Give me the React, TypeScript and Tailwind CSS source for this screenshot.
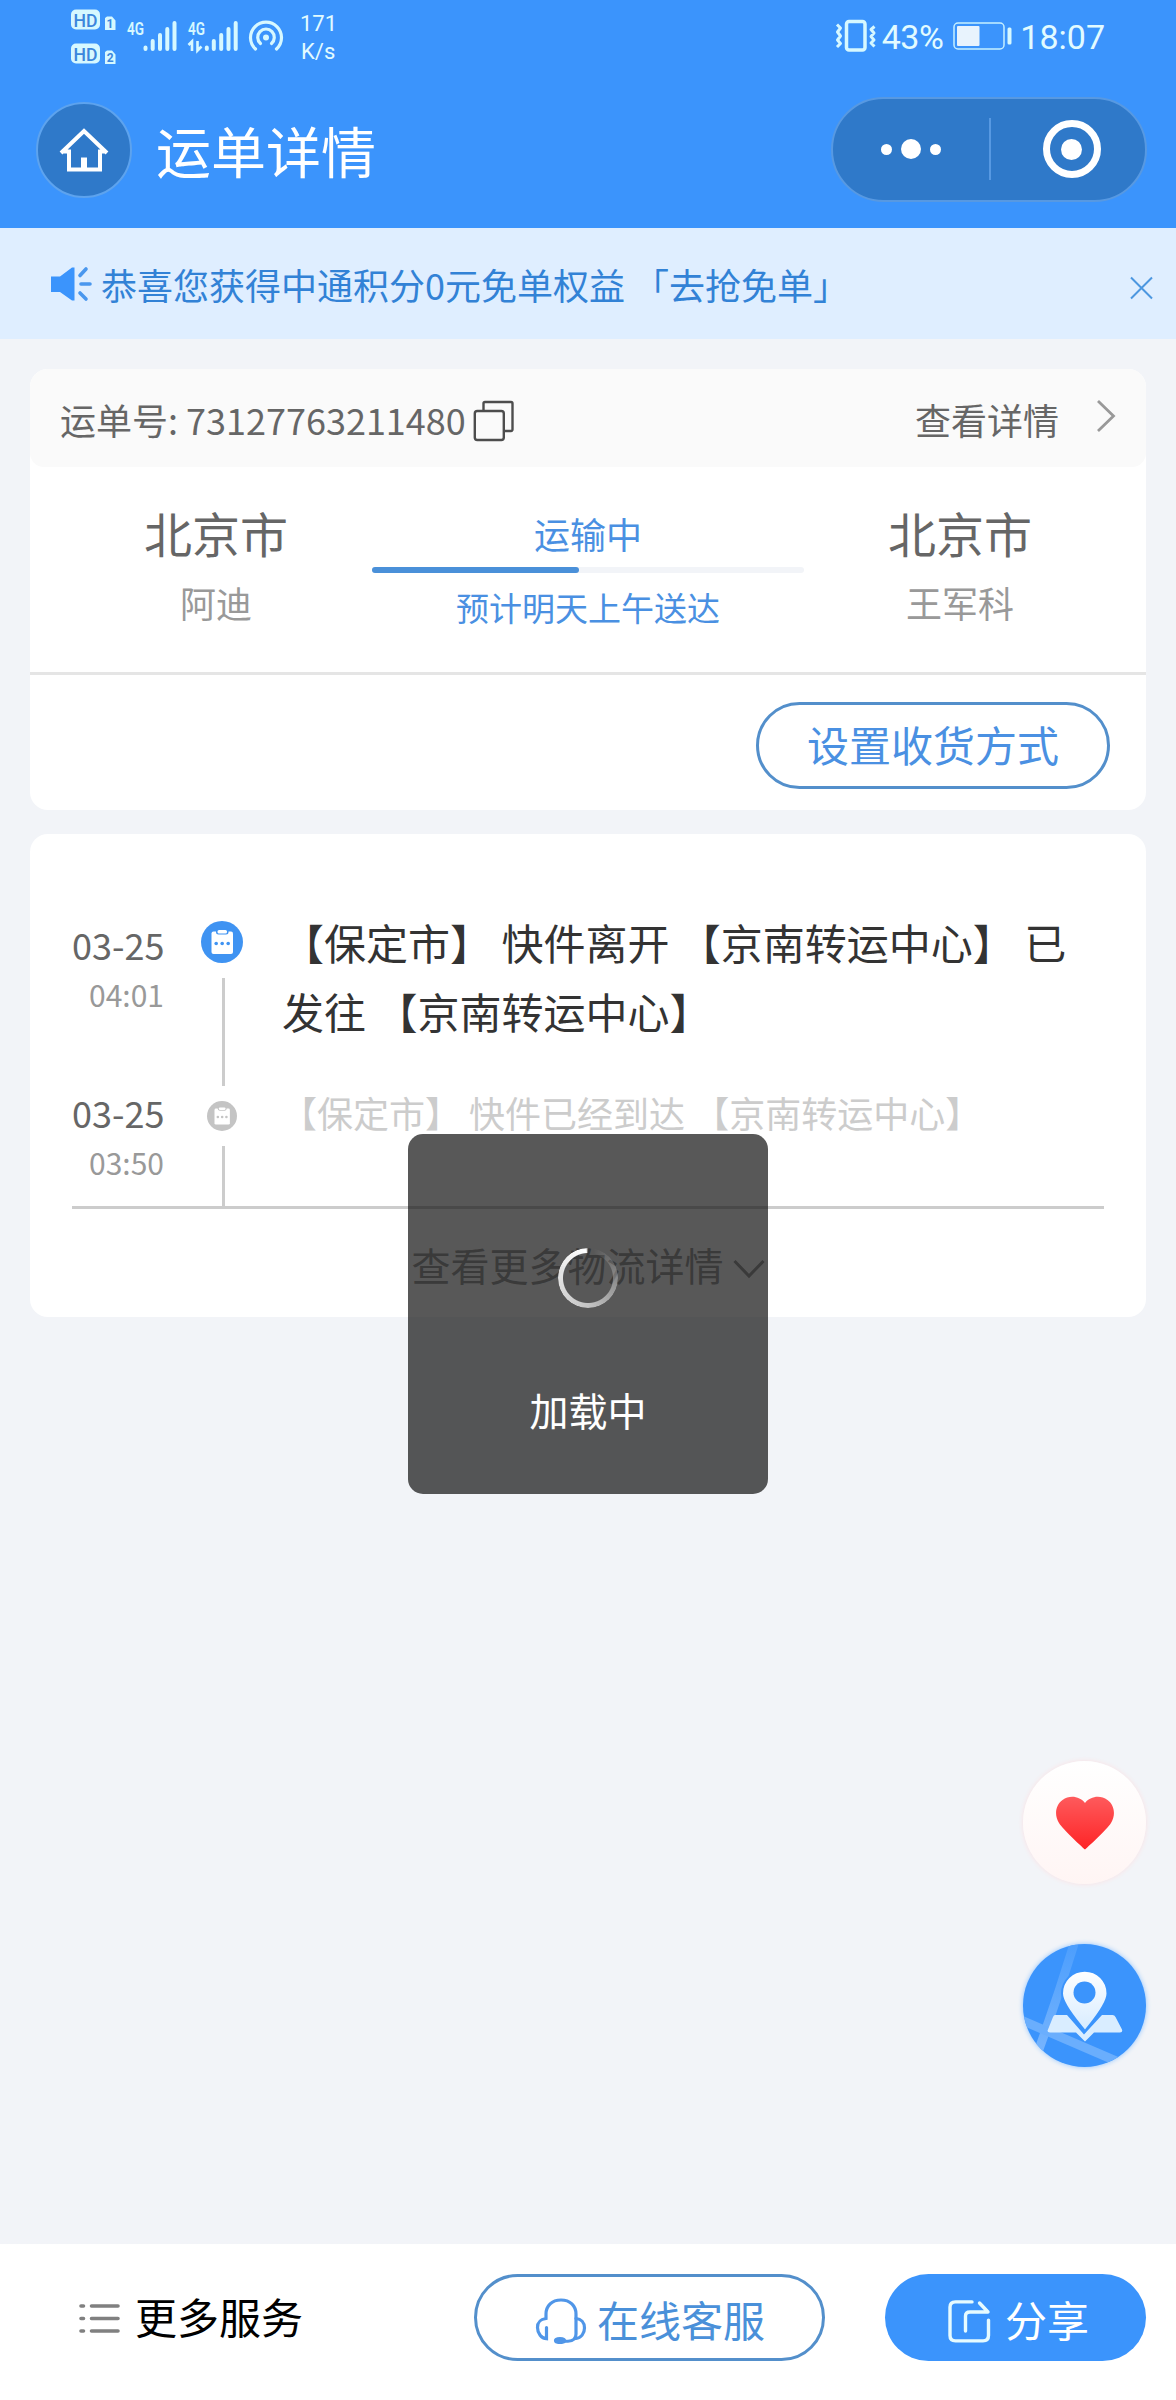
const events = [
    {
        date: '03-25',
        time: '04:01',
        text: '【保定市】 快件离开 【京南转运中心】 已发往 【京南转运中心】',
        current: true,
    },
    {
        date: '03-25',
        time: '03:50',
        text: '【保定市】 快件已经到达 【京南转运中心】',
        current: false,
    },
];

function SignalIcons() {
    return (
        <svg width="200" height="72" viewBox="68 0 200 72" fill="#d6f8ff" className="shrink-0 font-['Roboto',sans-serif]">
            <rect x="71" y="9.5" width="29" height="20" rx="5" />
            <rect x="71" y="43.5" width="29" height="20" rx="5" />
            <g fill="#3c86dc" fontSize="19" fontWeight="500" textAnchor="middle">
                <text x="85.5" y="26.5" textLength="24" lengthAdjust="spacingAndGlyphs">HD</text>
                <text x="85.5" y="60.5" textLength="24" lengthAdjust="spacingAndGlyphs">HD</text>
            </g>
            <path d="M107 16.5h5l3.5 4V30h-10.5V18zM107 50.5h5l3.5 4V64h-10.5V52z" />
            <g fill="#3c86dc" fontSize="12" fontWeight="700" textAnchor="middle">
                <text x="110" y="28">1</text>
                <text x="110.3" y="62">2</text>
            </g>
            <g fontSize="19" fontWeight="600">
                <text x="127" y="34.5" textLength="17" lengthAdjust="spacingAndGlyphs">4G</text>
                <text x="188" y="34.5" textLength="17" lengthAdjust="spacingAndGlyphs">4G</text>
            </g>
            <g stroke="#d6f8ff" strokeWidth="4" strokeLinecap="round">
                <path d="M145.5 47.5v1.5M152.7 41v8M160 35v14M167.3 29v20M174.5 23v26" />
                <path d="M206.8 47.5v1.5M213.8 41v8M221.2 35v14M228.5 29v20M235.7 23v26" />
            </g>
            <path d="M188.5 45l3.5-3.5V51M197.5 41v9.5l4-4" fill="none" stroke="#d6f8ff" strokeWidth="2.6" />
        </svg>
    );
}

function HotspotIcon() {
    return (
        <svg width="36" height="36" viewBox="0 0 36 36" fill="none" stroke="#d6f8ff" strokeWidth="3.2" strokeLinecap="round">
            <path d="M7.5 30a15.5 15.5 0 1 1 21 0" />
            <path d="M12.5 24.5a8.3 8.3 0 1 1 11 0" />
            <circle cx="18" cy="18.5" r="3" fill="#d6f8ff" stroke="none" />
        </svg>
    );
}

function VibrateIcon() {
    return (
        <svg width="42" height="34" viewBox="0 0 42 34" fill="none" stroke="#d6f8ff" strokeWidth="3" strokeLinejoin="round">
            <rect x="11.5" y="2.5" width="18.5" height="28.5" rx="2.5" strokeWidth="3.5" />
            <path d="M2 5.500l3.500 3.500-3 4 3 4-3 4 3 3.500L2 28M39.500 7.500L36 10.500l3 3.500-3 3.500 3 3.500-3 3 3.500 3.500" />
        </svg>
    );
}

function BatteryIcon() {
    return (
        <svg width="60" height="28" viewBox="0 0 60 28" fill="none">
            <rect x="1" y="1" width="50" height="26" rx="4" stroke="#c5efff" strokeWidth="1.5" />
            <rect x="4" y="4" width="22.5" height="20" rx="1" fill="#e8f3fd" />
            <rect x="54.5" y="5.5" width="4" height="17" rx="1.5" fill="#d6f8ff" />
        </svg>
    );
}

function StatusBar() {
    return (
        <div className="flex h-[72px] items-center justify-between pl-[68px] pr-[71px] font-['Roboto',sans-serif] text-[#e2fbff]">
            <div className="flex items-center">
                <SignalIcons />
                <div className="-ml-5 -mb-px">
                    <HotspotIcon />
                </div>
                <div className="ml-4 mt-[3px] text-[22px] leading-[28px]">
                    <p>171</p>
                    <p className="ml-px">K/s</p>
                </div>
            </div>
            <div className="flex items-center text-[34px] leading-none">
                <VibrateIcon />
                <span className="ml-[5px] mt-0.5 tracking-[-0.5px]">43%</span>
                <span className="ml-2.5">
                    <BatteryIcon />
                </span>
                <span className="ml-[7px] mt-0.5">18:07</span>
            </div>
        </div>
    );
}

function TitleBar() {
    return (
        <div className="flex h-[156px] items-center pl-9 pr-[29px]">
            <button className="flex size-24 items-center justify-center rounded-full border-2 border-[#5da3ee] bg-[#2f79c9]">
                <svg width="50" height="46" viewBox="0 0 50 46" fill="none" stroke="#fff" strokeWidth="4">
                    <path d="M2 26L25 4l23 22M3.5 24.5h6.500V42.500h31V24.500h6" />
                    <path d="M25 43V30.5" strokeWidth="6" />
                </svg>
            </button>
            <h1 className="-mt-px ml-6 text-[55px] leading-none text-white">运单详情</h1>
            <div className="-mt-0.5 ml-auto flex h-[105px] w-[316px] items-center rounded-full border-2 border-[#5799e2] bg-[#2f79c9]">
                <div className="flex w-[156px] items-center justify-center gap-[9px]">
                    <i className="size-[11px] rounded-full bg-white" />
                    <i className="size-5 rounded-full bg-white" />
                    <i className="size-[11px] rounded-full bg-white" />
                </div>
                <div className="h-[62px] w-0.5 bg-[#5799e2]" />
                <div className="flex flex-1 items-center justify-center pl-[7px]">
                    <div className="flex size-[58px] items-center justify-center rounded-full border-[7px] border-white">
                        <i className="size-[21px] rounded-full bg-white" />
                    </div>
                </div>
            </div>
        </div>
    );
}

function Notice() {
    return (
        <div className="flex h-[111px] items-center bg-[#dfeeff] pl-[50px] pr-[23px] text-[36px] leading-none text-[#3282d6]">
            <svg width="42" height="36" viewBox="0 0 42 36" fill="#3b94fc">
                <path d="M1 10.500h9L22 1.500h2.500v33H22L10 26H1z" />
                <path d="M30 9.500l6-6.500M31 18h9M30 27l6 6" fill="none" stroke="#4a97ee" strokeWidth="3.6" strokeLinecap="round" />
            </svg>
            <p className="ml-[9px] whitespace-pre">恭喜您获得中通积分0元免单权益 「去抢免单」</p>
            <svg width="23" height="24" viewBox="0 0 23 24" stroke="#4c97e0" strokeWidth="2" className="ml-auto mt-2">
                <path d="M1 1.500l21 21M22 1.500l-21 21" />
            </svg>
        </div>
    );
}

function WaybillCard() {
    return (
        <section className="overflow-hidden rounded-[18px] bg-white">
            <div className="flex h-[98px] items-center rounded-b-[14px] bg-[#fafafa] px-[30px] text-[36px] leading-none text-[#666]">
                <span className="mt-0.5">运单号: 73127763211480</span>
                <svg width="42" height="42" viewBox="0 0 42 42" fill="none" stroke="#4d4d4d" strokeWidth="2.4" className="ml-[7px] mt-1.5">
                    <rect x="1.8" y="11" width="29" height="29" rx="2.5" />
                    <path d="M10.500 11V3.500a1.500 1.500 0 0 1 1.500-1.500h26a1.500 1.500 0 0 1 1.500 1.500v26a1.500 1.500 0 0 1-1.500 1.500H31" />
                </svg>
                <span className="ml-auto mt-0.5">查看详情</span>
                <svg width="20" height="34" viewBox="0 0 20 34" fill="none" stroke="#999" strokeWidth="2.8" className="-mt-1 ml-[37px]">
                    <path d="M2 2l15.500 15L2 32" />
                </svg>
            </div>
            <div className="flex h-[205px] px-[30px] pt-[35px] text-center">
                <div className="w-[312px]">
                    <p className="text-[48px] leading-[60px] text-[#666]">北京市</p>
                    <p className="mt-2.5 text-[36px] leading-[60px] text-[#999]">阿迪</p>
                </div>
                <div className="w-[432px] text-[#4a90e2]">
                    <p className="text-[36px] leading-[62px]">运输中</p>
                    <div className="mt-[3px] h-1.5 rounded-full bg-[#f2f4f8]">
                        <div className="h-full w-[48%] rounded-full bg-[#4a90d9]" />
                    </div>
                    <p className="mt-1.5 text-[33px] leading-[56px]">预计明天上午送达</p>
                </div>
                <div className="w-[312px]">
                    <p className="text-[48px] leading-[60px] text-[#666]">北京市</p>
                    <p className="mt-2.5 text-[36px] leading-[60px] text-[#999]">王军科</p>
                </div>
            </div>
            <div className="flex h-[138px] items-start justify-end border-t-[3px] border-[#e5e5e5] pr-9 pt-[27px]">
                <button className="h-[87px] w-[354px] rounded-full border-[3px] border-[#538fcb] pb-[3px] text-[42px] leading-[78px] text-[#4a90e2]">
                    设置收货方式
                </button>
            </div>
        </section>
    );
}

function EventIcon({ current }: { current: boolean }) {
    return (
        <svg viewBox="0 0 42 42" className={current ? 'size-[42px] text-[#3f93f2]' : 'mb-1.5 mt-3 size-[30px] shrink-0 text-[#c4c4c4]'}>
            <circle cx="21" cy="21" r="21" fill="currentColor" />
            <rect x="10.5" y="10.5" width="21.5" height="22.5" rx="2" fill="#fff" />
            <rect x="15" y="7.5" width="12.5" height="6" rx="2.5" fill="currentColor" />
            <rect x="16.5" y="9" width="9.5" height="3.5" rx="1.5" fill="#fff" />
            <g fill="currentColor">
                <circle cx="15.2" cy="22.5" r="1.8" />
                <circle cx="21.2" cy="22.5" r="1.8" />
                <circle cx="27.2" cy="22.5" r="1.8" />
            </g>
        </svg>
    );
}

function Timeline() {
    return (
        <section className="mt-6 h-[483px] rounded-[18px] bg-white px-[42px] pt-[87px]">
            <div className="border-b-[3px] border-[#ccc]">
                {events.map((event) => (
                    <div key={event.time} className={event.current ? 'flex h-[174px]' : 'flex h-[111px]'}>
                        <div className={event.current ? '-mt-[3px] w-[92px] text-right' : '-mt-[9px] w-[92px] text-right'}>
                            <p className="whitespace-nowrap text-[36px] leading-[52px] text-[#666]">{event.date}</p>
                            <p className="text-[30px] leading-[48px] text-[#999]">{event.time}</p>
                        </div>
                        <div className={event.current ? 'ml-[37px] flex w-[42px] flex-col items-center' : '-mt-1.5 ml-[37px] flex w-[42px] flex-col items-center'}>
                            <EventIcon current={event.current} />
                            <div className={event.current ? 'ml-[3px] mt-[15px] h-[108px] w-[3px] bg-[#ccc]' : 'ml-[3px] mt-[9px] w-[3px] flex-1 bg-[#ccc]'} />
                        </div>
                        <p
                            className={
                                event.current
                                    ? '-mt-[14px] ml-[39px] flex-1 text-[42px] leading-[69px] text-[#333]'
                                    : '-mt-[13px] ml-[38px] flex-1 text-[36px] leading-[60px] text-[#ccc]'
                            }
                        >
                            {event.text}
                        </p>
                    </div>
                ))}
            </div>
            <div className="flex h-[110px] items-center justify-center text-[39px] leading-none text-[#999]">
                <span>查看更多物流详情</span>
                <svg width="32" height="20" viewBox="0 0 32 20" fill="none" stroke="currentColor" strokeWidth="3" className="ml-[9px] mt-2.5">
                    <path d="M1.500 2l14.500 15L30.500 2" />
                </svg>
            </div>
        </section>
    );
}

function LoadingToast() {
    return (
        <div className="absolute left-[408px] top-[1134px] flex size-[360px] flex-col items-center rounded-[15px] bg-[rgba(17,17,17,0.7)] pt-[114px] text-white">
            <div className="size-[60px] rounded-full bg-[conic-gradient(rgba(255,255,255,0)_3%,rgba(255,255,255,0.35)_28%,rgba(255,255,255,0.65)_50%,#fff_99%,rgba(255,255,255,0)_100%)] [mask:radial-gradient(circle,transparent_24.5px,#000_25.5px)]" />
            <p className="mt-[71px] text-[39px] leading-[60px]">加载中</p>
        </div>
    );
}

function FloatingButtons() {
    return (
        <div className="absolute right-[30px] top-[1761px] flex flex-col gap-[60px]">
            <button className="flex size-[123px] items-center justify-center rounded-full bg-gradient-to-b from-white to-[#fff5f4] shadow-[0_0_5px_#fbe0e2]">
                <svg width="60" height="54" viewBox="0 0 60 54">
                    <linearGradient id="heart" x1="0" y1="0" x2="0" y2="1">
                        <stop offset="0" stopColor="#fe5a5c" />
                        <stop offset="1" stopColor="#fe2426" />
                    </linearGradient>
                    <path
                        d="M30 53.500C26 50 8.500 34 4 27C-1 19 .500 9 7.500 4C15-1.500 25 .500 30 7C35 .500 45-1.500 52.500 4C59.500 9 61 19 56 27C51.500 34 34 50 30 53.500z"
                        fill="url(#heart)"
                    />
                </svg>
            </button>
            <button className="size-[123px] overflow-hidden rounded-full bg-[#3b94fc] shadow-[0_0_5px_#8cc2ff]">
                <svg width="123" height="123" viewBox="0 0 123 123">
                    <linearGradient id="pin" x1="0" y1="0" x2="0" y2="1">
                        <stop offset="0" stopColor="#fff" />
                        <stop offset="1" stopColor="#d6ebff" />
                    </linearGradient>
                    <linearGradient id="road" x1="0" y1="0" x2="0" y2="1">
                        <stop offset="0" stopColor="#4c9efd" />
                        <stop offset="1" stopColor="#76b4fd" />
                    </linearGradient>
                    <g fill="none" strokeWidth="9">
                        <path d="M51 0C40 36 28 72 15 108" stroke="url(#road)" />
                        <path d="M-2 76L100 120" stroke="#6aaefd" />
                    </g>
                    <path d="M32 71h12l17 19.500L79 71h10.500q2 0 3 2l6.500 12.500q1 3-2 3H71L62 97.500 53 88.500H27q-3.500 0-2-3L30 73q.8-2 2-2z" fill="#d9edff" />
                    <path
                        d="M62 87C56 79 39 61 39 49.500a22.700 22.700 0 0 1 45.500 0C84.500 61 68 79 62 87z"
                        fill="url(#pin)"
                        stroke="#3b94fc"
                        strokeWidth="2"
                    />
                    <circle cx="61.5" cy="48.5" r="11" fill="#3b94fc" />
                </svg>
            </button>
        </div>
    );
}

function Footer() {
    return (
        <div className="mt-auto flex h-[156px] items-start bg-white pl-[78px] pr-[30px] pt-[30px] text-[42px] leading-none">
            <div className="flex h-[87px] items-center">
                <svg width="42" height="32" viewBox="0 0 42 32" stroke="#808080" strokeWidth="3.6" strokeLinecap="round" className="mt-0.5">
                    <path d="M3 3h2.500M3 15.500h2.500M3 28h2.500M13.500 3H40M13.500 15.500H40M13.500 28H40" />
                </svg>
                <span className="-mt-[3px] ml-[15px] text-black">更多服务</span>
            </div>
            <button className="ml-auto flex h-[87px] w-[351px] items-center rounded-full border-[3px] border-[#538fcb] pl-[58px] text-[#4a90d9]">
                <svg width="52" height="46" viewBox="0 0 52 46" fill="none" stroke="#5096e8" strokeWidth="3.2" strokeLinecap="round" className="mt-1.5">
                    <path d="M11.500 31V43c-5-.500-9-5.500-9-12s3-8.500 8.500-9.500V17C11 8 17 2 26 2s15 6 15 15v21c0 5-3 7.500-8 7.500h-5" transform="scale(1 .95)" />
                    <path d="M41 20.500c5 .500 8.500 4 8.500 9.500s-3.500 10-8.500 10.500" />
                    <ellipse cx="25" cy="42.5" rx="4.5" ry="2" fill="#5096e8" />
                </svg>
                <span className="ml-2.5 mt-0.5">在线客服</span>
            </button>
            <button className="ml-[60px] flex h-[87px] w-[261px] items-center rounded-full bg-[#3b94fc] pl-[62px] text-white">
                <svg width="44" height="44" viewBox="0 0 44 44" fill="none" stroke="#e6fbff" strokeWidth="3.4" strokeLinecap="round" strokeLinejoin="round" className="mt-1.5">
                    <path d="M25 3H8.500Q3 3 3 8.500V38q0 5.500 5.500 5.500H36q5.500 0 5.500-5.500V22" transform="scale(1 .96)" />
                    <path d="M32.500 4L41 13H23q-4.500 0-4.500 4V32" />
                </svg>
                <span className="ml-3.5 mt-0.5">分享</span>
            </button>
        </div>
    );
}

export default function App() {
    return (
        <div className="relative flex h-[2400px] w-[1176px] flex-col bg-[#f2f4f8] font-['Noto_Sans_CJK_SC',sans-serif]">
            <header className="h-[228px] bg-[#3b94fc]">
                <StatusBar />
                <TitleBar />
            </header>
            <Notice />
            <main className="px-[30px] pt-[30px]">
                <WaybillCard />
                <Timeline />
            </main>
            <Footer />
            <FloatingButtons />
            <LoadingToast />
        </div>
    );
}
